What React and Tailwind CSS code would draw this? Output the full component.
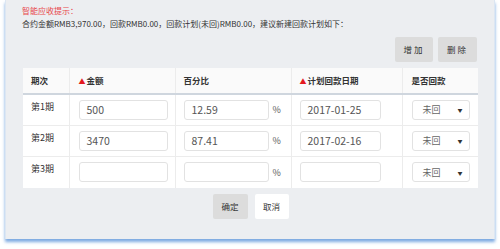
import React from 'react';

const rows = [
  { label: '第1期', amount: '500', pct: '12.59', date: '2017-01-25', state: '未回' },
  { label: '第2期', amount: '3470', pct: '87.41', date: '2017-02-16', state: '未回' },
  { label: '第3期', amount: '', pct: '', date: '', state: '未回' },
];

const font = { fontFamily: '"Noto Sans CJK SC", "Noto Sans", sans-serif' };

const Field = ({ value, className }) => (
  <div className={`h-[20px] bg-white border border-[#e2e2e2] rounded-[3px] px-[7px] text-[10.5px] leading-[18px] text-[#555] ${className}`}>
    {value}
  </div>
);

const App = () => {
  return (
    <div className="w-[500px] h-[249px] bg-white" style={font}>
      <div className="ml-[5px] w-[490px] h-[239px] bg-[#eceef1] border-l border-r border-[#dce6f2] shadow-[0_3px_3px_rgba(80,140,215,0.75)] px-[16px] pt-[4px]">
        <div className="text-[8px] leading-[13px] text-[#e8474b]">智能应收提示：</div>
        <div className="text-[8px] leading-[13px] text-[#333]">
          合约金额RMB3,970.00，回款RMB0.00，回款计划(未回)RMB0.00，建议新建回款计划如下：
        </div>

        {/* 操作按钮 */}
        <div className="flex justify-end gap-[5px] mt-[7px] pr-[1px]">
          <button className="w-[38px] h-[25px] bg-[#dcdcdc] rounded-[2px] text-[8.5px] text-[#333] tracking-[2px]">增加</button>
          <button className="w-[39px] h-[25px] bg-[#dcdcdc] rounded-[2px] text-[8.5px] text-[#333] tracking-[2px]">删除</button>
        </div>

        <table className="mt-[6px] ml-[1px] w-[455px] bg-white border-collapse table-fixed text-[8.5px] text-[#333]">
          <colgroup>
            <col className="w-[46px]" />
            <col className="w-[106px]" />
            <col className="w-[116px]" />
            <col className="w-[111px]" />
            <col className="w-[76px]" />
          </colgroup>
          <thead>
            <tr className="h-[26px] bg-[#fafafa] border-b-2 border-[#cfd6de]">
              <th className="px-[8px] text-left font-bold border-r border-[#ececec]">期次</th>
              <th className="px-[9px] text-left font-bold border-r border-[#ececec]">
                <span className="text-[#e4191f] text-[7px] mr-[1px]">▲</span>金额
              </th>
              <th className="px-[8px] text-left font-bold border-r border-[#ececec]">百分比</th>
              <th className="px-[8px] text-left font-bold border-r border-[#ececec]">
                <span className="text-[#e4191f] text-[7px] mr-[1px]">▲</span>计划回款日期
              </th>
              <th className="px-[9px] text-left font-bold">是否回款</th>
            </tr>
          </thead>
          <tbody>
            {rows.map((r, i) => (
              <tr key={r.label} className={`h-[31px] ${i < rows.length - 1 ? 'border-b border-[#ececec]' : ''}`}>
                <td className="px-[8px] pt-[6px] align-top leading-[12px] text-[9px] border-r border-[#ececec]">{r.label}</td>
                <td className="pl-[9px] pr-[8px] py-[5px] border-r border-[#ececec]">
                  <Field value={r.amount} className="w-[89px]" />
                </td>
                <td className="pl-[8px] py-[5px] border-r border-[#ececec]">
                  <div className="flex items-center">
                    <Field value={r.pct} className="w-[85px]" />
                    <span className="ml-[4px] text-[9px] text-[#555]">%</span>
                  </div>
                </td>
                <td className="pl-[8px] py-[5px] border-r border-[#ececec]">
                  <Field value={r.date} className="w-[81px]" />
                </td>
                <td className="pl-[9px] py-[5px]">
                  <div className="w-[58px] h-[20px] bg-white border border-[#e2e2e2] rounded-[3px] pl-[10px] pr-[6px] flex items-center justify-between text-[9px] text-[#666]">
                    <span>{r.state}</span>
                    <span className="text-[5px] text-[#333]">▼</span>
                  </div>
                </td>
              </tr>
            ))}
          </tbody>
        </table>

        <div className="flex justify-center gap-[7px] mt-[6px] pl-[1px]">
          <button className="w-[35px] h-[25px] bg-[#dcdcdc] rounded-[2px] text-[8.5px] text-[#333]">确定</button>
          <button className="w-[34px] h-[25px] bg-white rounded-[2px] text-[8.5px] text-[#333]">取消</button>
        </div>
      </div>
    </div>
  );
};

export default App;
